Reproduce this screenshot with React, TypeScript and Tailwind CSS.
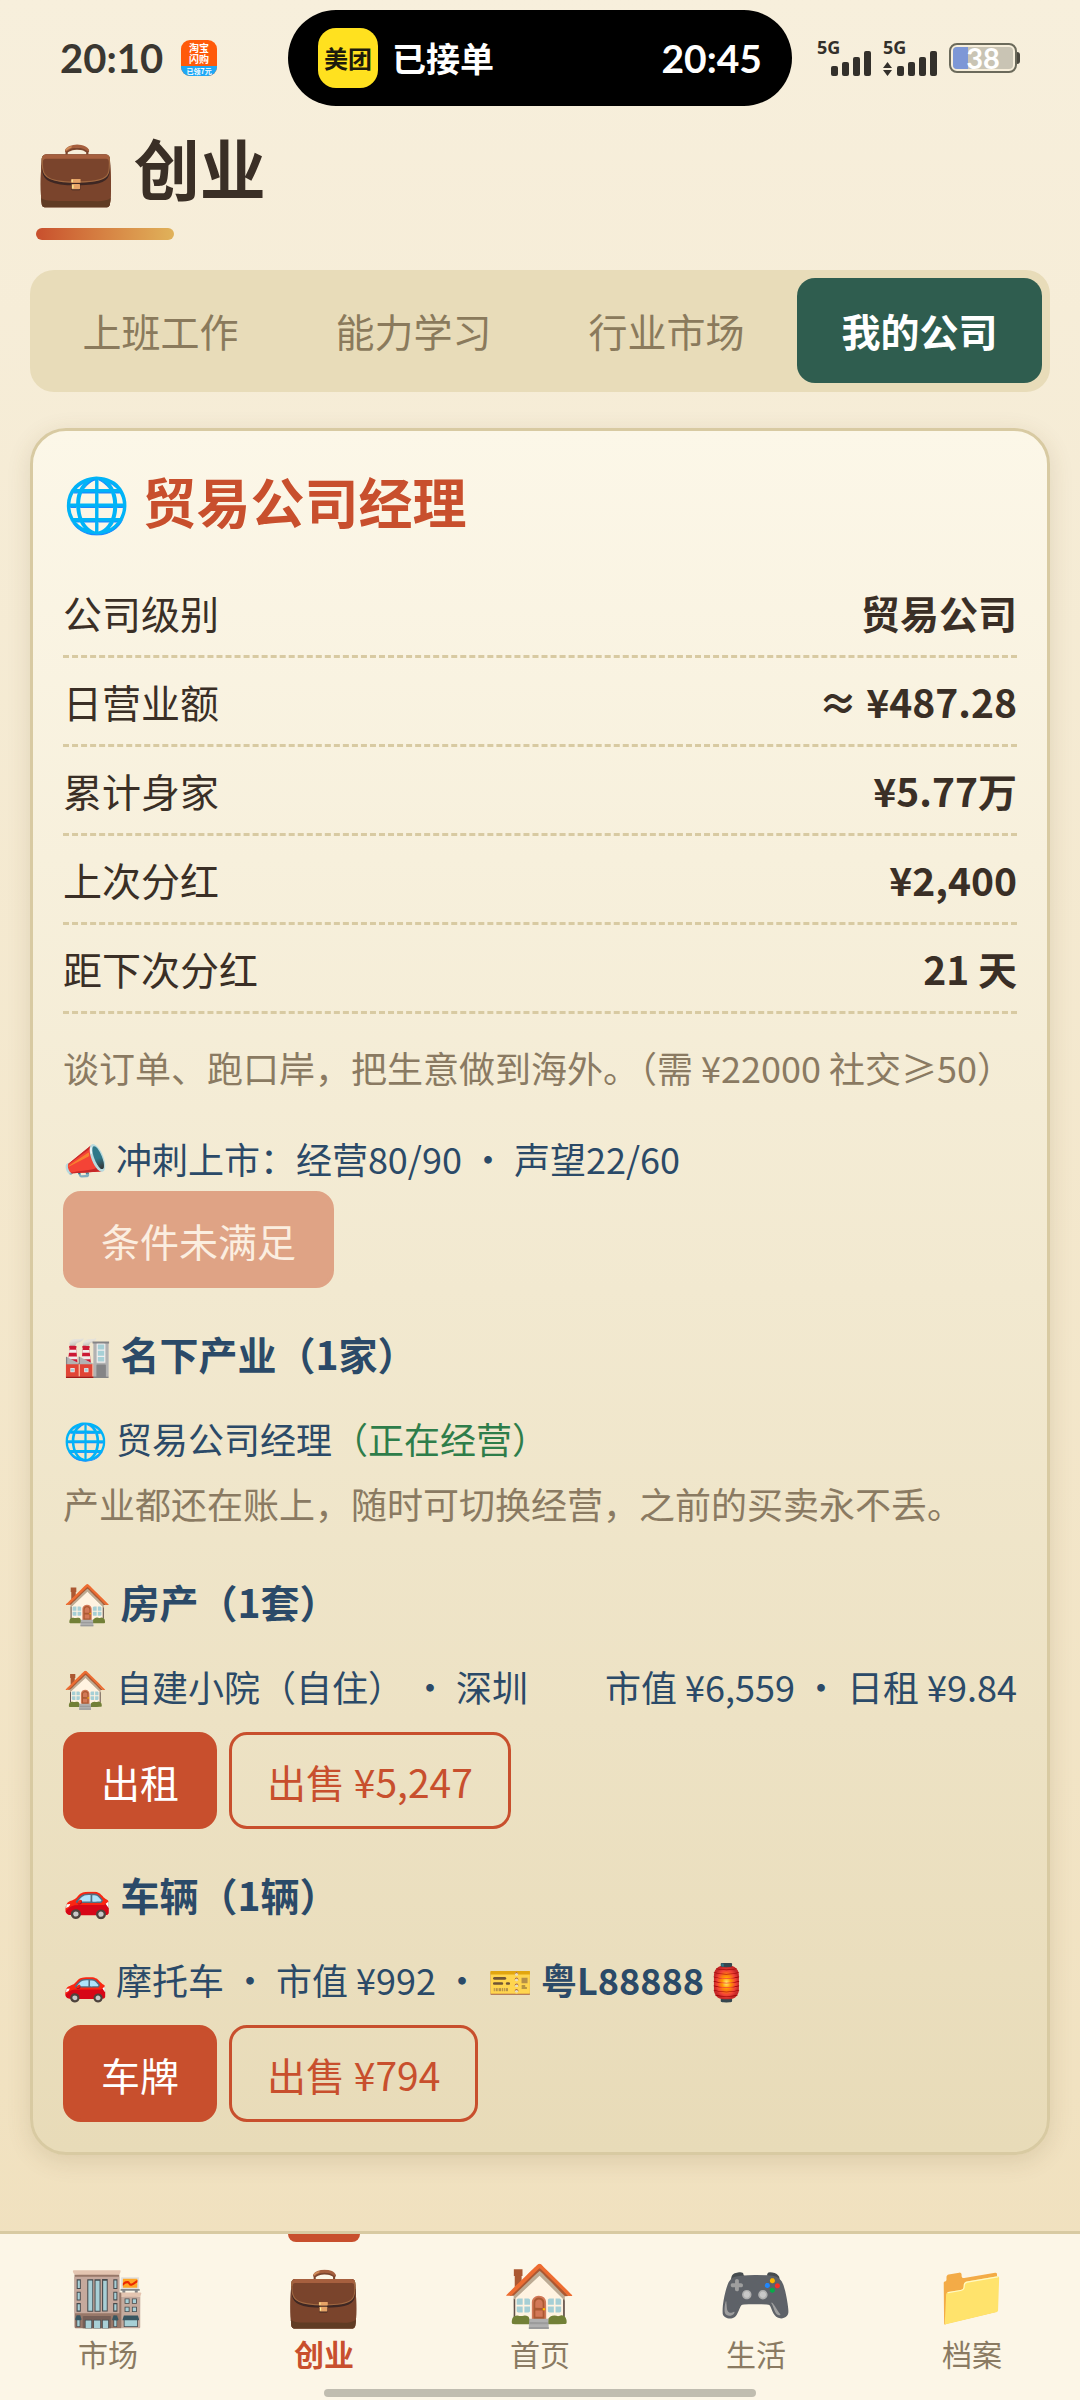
import type { ReactNode } from 'react';

const tabs = ['上班工作', '能力学习', '行业市场', '我的公司'];

const stats = [
  { label: '公司级别', value: '贸易公司' },
  { label: '日营业额', value: '≈ ¥487.28' },
  { label: '累计身家', value: '¥5.77万' },
  { label: '上次分红', value: '¥2,400' },
  { label: '距下次分红', value: '21 天' },
];

const navItems = [
  { icon: '🏬', label: '市场' },
  { icon: '💼', label: '创业' },
  { icon: '🏠', label: '首页' },
  { icon: '🎮', label: '生活' },
  { icon: '📁', label: '档案' },
];

function SignalBars({ arrows }: { arrows?: boolean }) {
  return (
    <div className="relative h-9 w-[55px]">
      <span className="absolute top-0 left-0 font-['Noto_Sans',sans-serif] text-[18px] leading-[14px] font-bold">5G</span>
      <svg viewBox="0 0 55 36" className="h-9 w-[55px]" fill="#33302b" aria-hidden="true">
        {arrows && <path d="M4.5 22 L9 28 H0 Z M0 30 H9 L4.5 36 Z" />}
        <rect x="14" y="26" width="7" height="10" rx="2" />
        <rect x="25" y="22" width="7" height="14" rx="2" />
        <rect x="36" y="17" width="7" height="19" rx="2" />
        <rect x="47" y="11" width="7" height="25" rx="2" />
      </svg>
    </div>
  );
}

function StatusBar() {
  return (
    <header className="relative flex h-[116px] items-center justify-between px-[60px]">
      <div className="flex items-center gap-[18px]">
        <span className="font-['Lato',sans-serif] text-[40px] leading-[48px] font-bold text-[#3a3731]">20:10</span>
        <div className="flex h-9 w-9 flex-col overflow-hidden rounded-[9px] bg-[#ff5a0a] text-center text-[10px] leading-[11px] font-bold text-white">
          <span className="pt-[2px]">淘宝</span>
          <span>闪购</span>
          <span className="mt-auto bg-[#1fa8f5] text-[7px] leading-[10px]">已领7元</span>
        </div>
      </div>
      <div className="absolute top-[10px] left-1/2 flex h-24 w-[504px] -translate-x-1/2 items-center rounded-full bg-black px-[30px] text-white">
        <div className="flex h-[60px] w-[60px] items-center justify-center rounded-[18px] bg-[#ffe11f] text-[24px] leading-none font-bold text-[#1c1a0c]">
          美团
        </div>
        <span className="ml-[14px] text-[34px] leading-[48px] font-bold">已接单</span>
        <span className="ml-auto font-['Lato',sans-serif] text-[39px] leading-[48px] font-bold">20:45</span>
      </div>
      <div className="flex items-center gap-[11px] text-[#33302b]">
        <SignalBars />
        <SignalBars arrows />
        <div className="flex items-center">
          <div className="relative h-[30px] w-[68px] rounded-[8px] border-2 border-[#6b6a5b] p-[2px]">
            <div className="flex h-full overflow-hidden rounded-[4px] bg-[#c9c4b4]">
              <div className="w-1/4 bg-[#7d97d6]" />
            </div>
            <span className="absolute inset-0 text-center font-['Lato',sans-serif] text-[29px] leading-[26px] font-bold text-white">38</span>
          </div>
          <div className="h-3 w-[3px] rounded-r-sm bg-[#4b493f]" />
        </div>
      </div>
    </header>
  );
}

function Heading({ icon, children }: { icon: string; children: ReactNode }) {
  return (
    <h3 className="mt-[30px] mb-[18px] text-[39px] leading-[70px] font-bold text-[#2b4a68]">
      {icon} {children}
    </h3>
  );
}

function Button({ variant = 'solid', disabled, children }: { variant?: 'solid' | 'outline'; disabled?: boolean; children: ReactNode }) {
  const look = variant === 'solid' ? 'bg-[#c84f2d] text-white' : 'text-[#c84f2d]';
  return (
    <button
      type="button"
      disabled={disabled}
      className={`h-[97px] rounded-[18px] border-[3px] border-[#c84f2d] px-[35px] text-[39px] leading-[58px] disabled:border-[#dfa385] disabled:bg-[#dfa385] disabled:text-[#fbeee0] ${look}`}
    >
      {children}
    </button>
  );
}

export default function App() {
  return (
    <div className="flex min-h-screen flex-col bg-linear-to-b from-[#f7efdc] to-[#f0e0bd] font-['Noto_Sans_CJK_SC','Noto_Color_Emoji',sans-serif] text-[#3a2f26]">
      <StatusBar />

      <main className="flex-1 px-[30px] pb-[74px]">
        <div className="px-[6px]">
          <h1 className="flex items-center gap-[18px] text-[64px] leading-[100px] font-bold">
            <span>💼</span>
            <span className="text-[66px]">创业</span>
          </h1>
          <div className="mt-3 h-3 w-[138px] rounded-full bg-linear-to-r from-[#c84f2d] to-[#e0b25a]" />
        </div>

        <div role="tablist" className="mt-[30px] grid grid-cols-4 gap-2 rounded-[24px] bg-[#e8dcb9] px-2 pt-2 pb-[9px]">
          {tabs.map((tab) => (
            <button
              key={tab}
              type="button"
              role="tab"
              aria-selected={tab === '我的公司'}
              className="h-[105px] rounded-[18px] text-[39px] text-[#8a7a5c] aria-selected:bg-[#2f5d4f] aria-selected:font-bold aria-selected:text-white"
            >
              {tab}
            </button>
          ))}
        </div>

        <section className="mt-9 rounded-[36px] border-[3px] border-[#d8caa2] bg-linear-to-b from-[#fcf7e8] to-[#e8dbb8] p-[30px] text-[36px] leading-[65px] text-[#2b4a68] shadow-[0_6px_24px_rgba(90,70,30,0.14)]">
          <h2 className="mb-7 text-[54px] leading-[80px] font-bold text-[#c84f2d]">🌐 贸易公司经理</h2>

          <dl className="text-[39px] leading-[62px] text-[#3a2f26]">
            {stats.map((row) => (
              <div key={row.label} className="flex justify-between border-b-[3px] border-dashed border-[#d8caa2] py-3">
                <dt>{row.label}</dt>
                <dd className="font-bold">{row.value}</dd>
              </div>
            ))}
          </dl>

          <p className="mt-[21px] text-[#8a7a62]">谈订单、跑口岸，把生意做到海外。（需 ¥22000 社交≥50）</p>

          <p className="mt-[26px]">📣 冲刺上市：经营80/90 • 声望22/60</p>
          <Button disabled>条件未满足</Button>

          <Heading icon="🏭">名下产业（1家）</Heading>
          <p>
            🌐 贸易公司经理<span className="text-[#2e7d4a]">（正在经营）</span>
          </p>
          <p className="text-[#8a7a62]">产业都还在账上，随时可切换经营，之前的买卖永不丢。</p>

          <Heading icon="🏠">房产（1套）</Heading>
          <div className="flex justify-between">
            <span>🏠 自建小院（自住） • 深圳</span>
            <span>市值 ¥6,559 • 日租 ¥9.84</span>
          </div>
          <div className="mt-[13px] flex gap-3">
            <Button>出租</Button>
            <Button variant="outline">出售 ¥5,247</Button>
          </div>

          <Heading icon="🚗">车辆（1辆）</Heading>
          <p>
            🚗 摩托车 • 市值 ¥992 • 🎫 <b>粤L88888🏮</b>
          </p>
          <div className="mt-[13px] flex gap-3">
            <Button>车牌</Button>
            <Button variant="outline">出售 ¥794</Button>
          </div>
        </section>
      </main>

      <nav className="border-t-[3px] border-[#d8caa2] bg-[#fcf6e7]">
        <div className="grid grid-cols-5">
          {navItems.map(({ icon, label }) => {
            const active = label === '创业';
            return (
              <a
                key={label}
                href="#"
                aria-current={active ? 'page' : undefined}
                className="relative flex flex-col items-center pt-5 text-[#8a7a62] aria-[current=page]:font-bold aria-[current=page]:text-[#c84f2d]"
              >
                {active && <span className="absolute top-0 h-2 w-[72px] rounded-b-[8px] bg-[#c84f2d]" />}
                <span className="text-[60px] leading-[72px]">{icon}</span>
                <span className="mt-1 text-[30px] leading-[46px]">{label}</span>
              </a>
            );
          })}
        </div>
        <div className="mx-auto mt-[13px] mb-[3px] h-2 w-2/5 rounded-full bg-[#c0bdb0]" />
      </nav>
    </div>
  );
}
